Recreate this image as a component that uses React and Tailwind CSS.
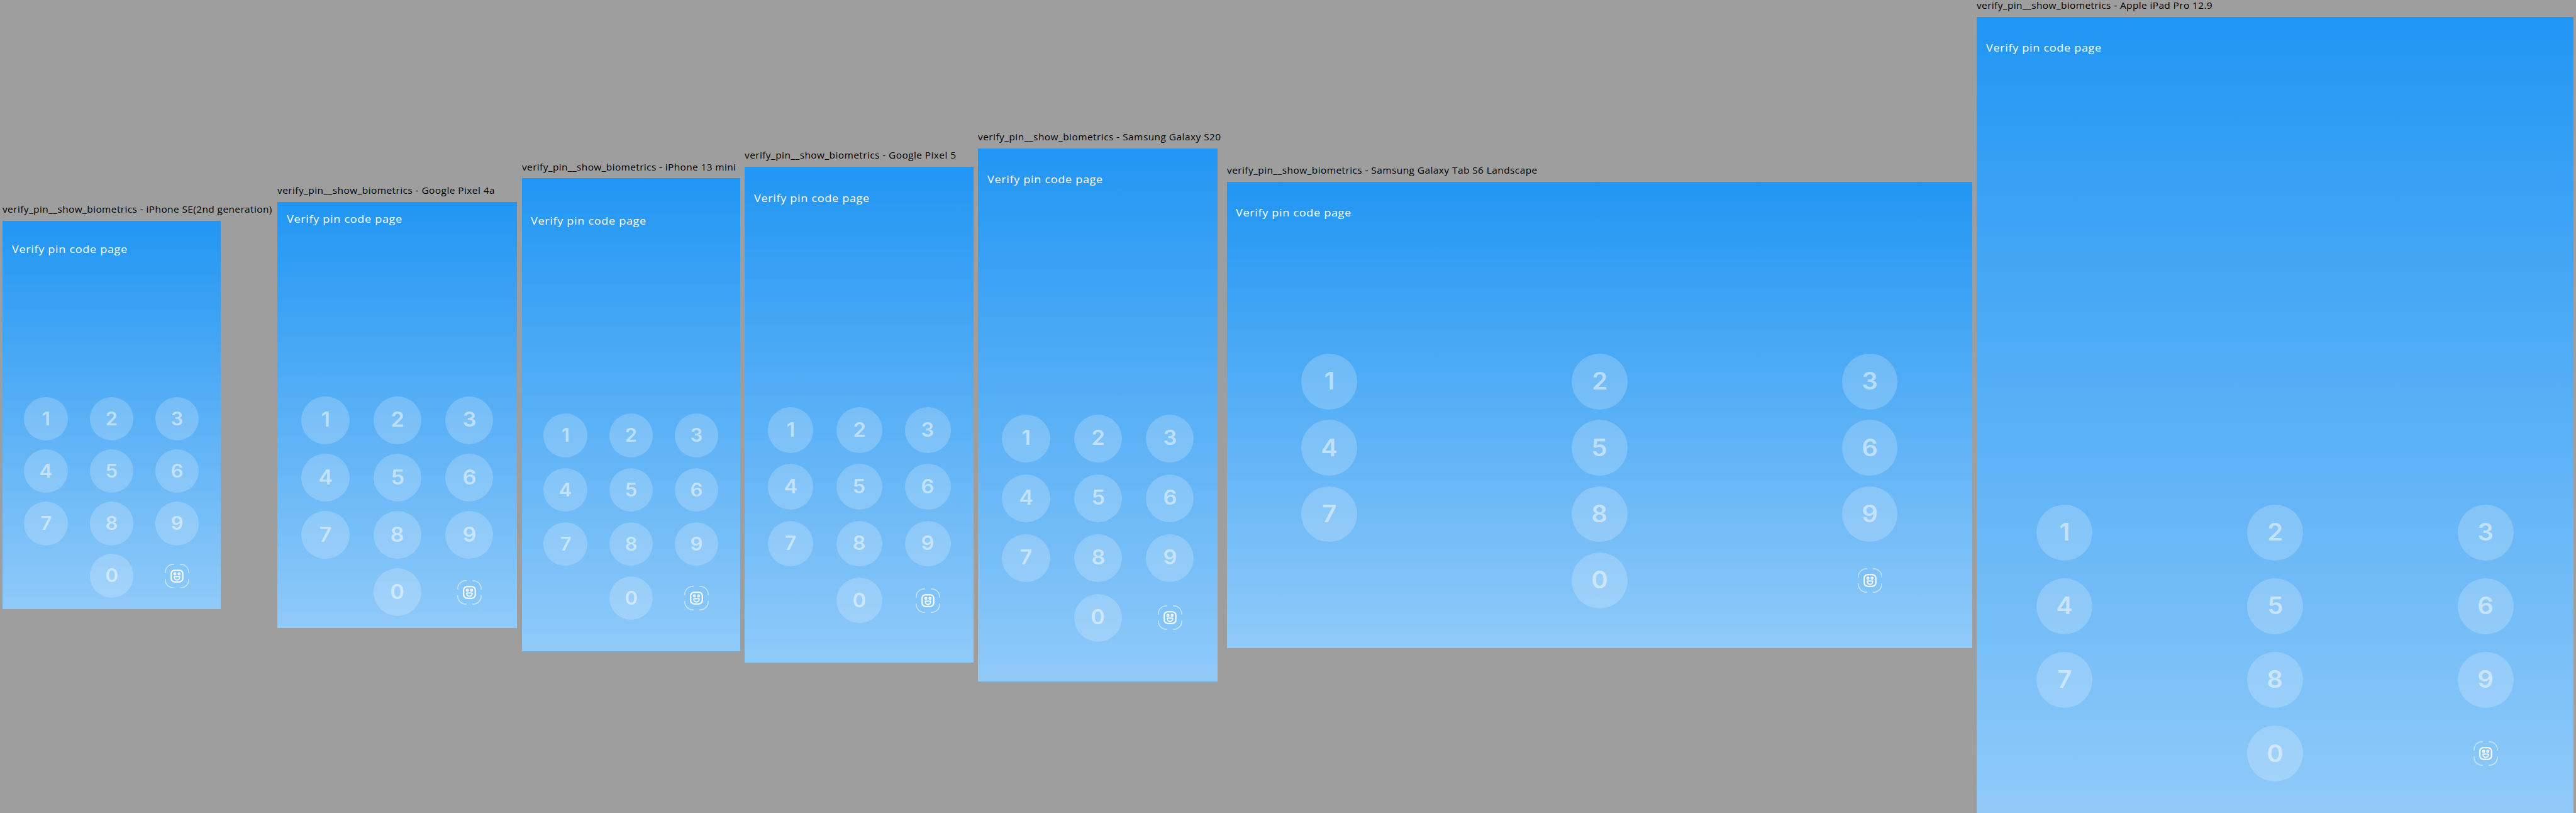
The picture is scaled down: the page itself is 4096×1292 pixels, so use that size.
const DEVICES = [
  {
    name: "iPhone SE(2nd generation)",
    column: "w-[464.5px]",
    label: "tracking-[0.38px]",
    screen: "h-[667px] w-[375px] pt-[20px] pb-[20px]",
    rows: "gap-y-[14.8px]",
    key: "size-[75px] text-[31.8px]",
  },
  {
    name: "Google Pixel 4a",
    column: "w-[411.4px]",
    label: "tracking-[0.41px]",
    screen: "h-[731.4px] w-[411.4px] pt-0 pb-[20px]",
    rows: "gap-y-[16.25px]",
    key: "size-[82.3px] text-[35px]",
  },
  {
    name: "iPhone 13 mini",
    column: "w-[375px]",
    label: "tracking-[0.353px]",
    screen: "h-[812px] w-[375px] pt-[44px] pb-[54px]",
    rows: "gap-y-[18.04px]",
    key: "size-[75px] text-[31.8px]",
  },
  {
    name: "Google Pixel 5",
    column: "w-[392.7px]",
    label: "tracking-[0.398px]",
    screen: "h-[851px] w-[392.7px] pt-[24px] pb-[68px]",
    rows: "gap-y-[18.9px]",
    key: "size-[78.5px] text-[33.3px]",
  },
  {
    name: "Samsung Galaxy S20",
    column: "w-[418.8px]",
    label: "tracking-[0.433px]",
    screen: "h-[914.3px] w-[411.4px] pt-[24px] pb-[68px]",
    rows: "gap-y-[20.3px]",
    key: "size-[82.3px] text-[35px]",
  },
  {
    name: "Samsung Galaxy Tab S6 Landscape",
    column: "w-[1280px]",
    label: "tracking-[0.407px]",
    screen: "h-[800px] w-[1280px] pt-[24px] pb-[68px]",
    rows: "gap-y-[17.8px]",
    key: "size-[96px] text-[40.8px]",
  },
  {
    name: "Apple iPad Pro 12.9",
    column: "w-[1024px]",
    label: "tracking-[0.36px]",
    screen: "h-[1366px] w-[1024px] pt-[24px] pb-[54px]",
    rows: "gap-y-[30.4px]",
    key: "size-[96px] text-[40.8px]",
  },
];

const KEYS = ["1", "2", "3", "4", "5", "6", "7", "8", "9", "", "0", "face"];

function FaceIcon() {
  return (
    <svg className="size-[42px]" viewBox="0 0 42 42" fill="none" stroke="white">
      <g strokeWidth="1.8" strokeOpacity="0.5">
        <path d="M0.9 16V14.5A13.6 13.6 0 0 1 14.5 0.9H16" />
        <path d="M26 0.9H27.5A13.6 13.6 0 0 1 41.1 14.5V16" />
        <path d="M41.1 26V27.5A13.6 13.6 0 0 1 27.5 41.1H26" />
        <path d="M16 41.1H14.5A13.6 13.6 0 0 1 0.9 27.5V26" />
      </g>
      <rect x="11" y="11" width="20" height="20" rx="6" strokeWidth="2.2" />
      <g strokeWidth="1.8">
        <circle cx="17.4" cy="17.3" r="1.7" />
        <circle cx="24.6" cy="17.3" r="1.7" />
        <path d="M16.4 22H25.6V23A4.6 4.6 0 0 1 16.4 23Z" strokeLinejoin="round" />
      </g>
    </svg>
  );
}

function Key({ value, size }) {
  if (value === "") return <span className={size} />;
  if (value === "face") {
    return (
      <button className={`flex items-center justify-center ${size}`} aria-label="Use biometrics">
        <FaceIcon />
      </button>
    );
  }
  return (
    <button
      className={`flex items-center justify-center rounded-full bg-white/20 font-['Inter',sans-serif] leading-none font-semibold text-white/50 ${size}`}
    >
      <span className="scale-x-[1.06]">{value}</span>
    </button>
  );
}

function Device({ device }) {
  return (
    <section className={`flex shrink-0 flex-col ${device.column}`}>
      <h2
        className={`h-[29px] w-max origin-left scale-x-110 text-[15.2px] leading-5 whitespace-nowrap text-black ${device.label}`}
      >
        verify_pin__show_biometrics - {device.name}
      </h2>
      <div
        className={`flex flex-col justify-between bg-linear-to-b/srgb from-[#2196f3] to-[#90caf9] ${device.screen}`}
      >
        <header className="flex h-14 items-center px-4 pt-0.5">
          <h1 className="origin-left scale-x-[1.06] text-[18.5px] font-medium tracking-[0.64px] whitespace-nowrap text-white">
            Verify pin code page
          </h1>
        </header>
        <div className={`grid grid-cols-[auto_auto_auto] justify-between px-[10%] ${device.rows}`}>
          {KEYS.map((value, i) => (
            <Key key={i} value={value} size={device.key} />
          ))}
        </div>
      </div>
    </section>
  );
}

export default function App() {
  return (
    <main className="h-[1292px] w-[4096px] overflow-hidden bg-[#9e9e9e]">
      <div className="flex h-[1395px] w-[4423px] items-center gap-2 px-1 font-['Open_Sans',sans-serif] [zoom:0.926068]">
        {DEVICES.map((device) => (
          <Device key={device.name} device={device} />
        ))}
      </div>
    </main>
  );
}
